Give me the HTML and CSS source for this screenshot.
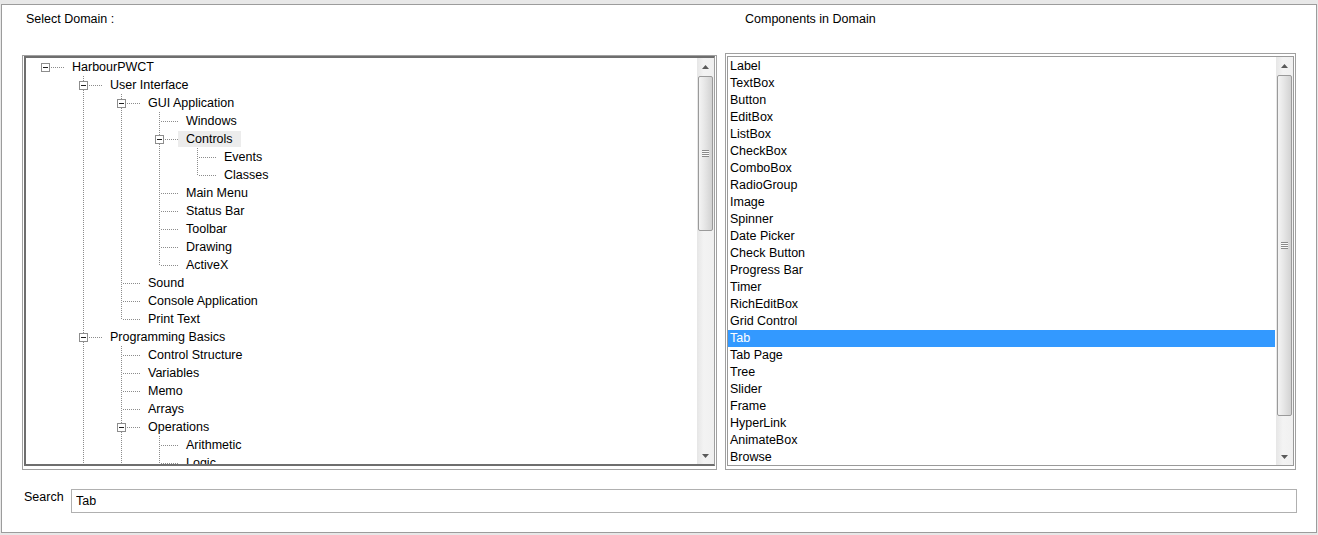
FILE: index.html
```html
<!DOCTYPE html>
<html>
<head>
<meta charset="utf-8">
<title>Select Domain</title>
<link rel="stylesheet" href="styles.css">
</head>
<body>
<div class="window">
  <div class="heads">
    <div class="head head-left">Select Domain :</div>
    <div class="head">Components in Domain</div>
  </div>
  <div class="panes">
    <div class="tframe">
      <div class="tinner">
        <div class="tree">
          <div class="node"><span class="g r"><i class="box"></i></span><span class="lbl">HarbourPWCT</span></div>
          <div class="node"><span class="g"></span><span class="g t"><i class="box"></i></span><span class="lbl">User Interface</span></div>
          <div class="node"><span class="g"></span><span class="g v"></span><span class="g t"><i class="box"></i></span><span class="lbl">GUI Application</span></div>
          <div class="node"><span class="g"></span><span class="g v"></span><span class="g v"></span><span class="g t"></span><span class="lbl">Windows</span></div>
          <div class="node"><span class="g"></span><span class="g v"></span><span class="g v"></span><span class="g t"><i class="box"></i></span><span class="lbl sel">Controls</span></div>
          <div class="node"><span class="g"></span><span class="g v"></span><span class="g v"></span><span class="g v"></span><span class="g t"></span><span class="lbl">Events</span></div>
          <div class="node"><span class="g"></span><span class="g v"></span><span class="g v"></span><span class="g v"></span><span class="g l"></span><span class="lbl">Classes</span></div>
          <div class="node"><span class="g"></span><span class="g v"></span><span class="g v"></span><span class="g t"></span><span class="lbl">Main Menu</span></div>
          <div class="node"><span class="g"></span><span class="g v"></span><span class="g v"></span><span class="g t"></span><span class="lbl">Status Bar</span></div>
          <div class="node"><span class="g"></span><span class="g v"></span><span class="g v"></span><span class="g t"></span><span class="lbl">Toolbar</span></div>
          <div class="node"><span class="g"></span><span class="g v"></span><span class="g v"></span><span class="g t"></span><span class="lbl">Drawing</span></div>
          <div class="node"><span class="g"></span><span class="g v"></span><span class="g v"></span><span class="g l"></span><span class="lbl">ActiveX</span></div>
          <div class="node"><span class="g"></span><span class="g v"></span><span class="g t"></span><span class="lbl">Sound</span></div>
          <div class="node"><span class="g"></span><span class="g v"></span><span class="g t"></span><span class="lbl">Console Application</span></div>
          <div class="node"><span class="g"></span><span class="g v"></span><span class="g l"></span><span class="lbl">Print Text</span></div>
          <div class="node"><span class="g"></span><span class="g t"><i class="box"></i></span><span class="lbl">Programming Basics</span></div>
          <div class="node"><span class="g"></span><span class="g v"></span><span class="g t"></span><span class="lbl">Control Structure</span></div>
          <div class="node"><span class="g"></span><span class="g v"></span><span class="g t"></span><span class="lbl">Variables</span></div>
          <div class="node"><span class="g"></span><span class="g v"></span><span class="g t"></span><span class="lbl">Memo</span></div>
          <div class="node"><span class="g"></span><span class="g v"></span><span class="g t"></span><span class="lbl">Arrays</span></div>
          <div class="node"><span class="g"></span><span class="g v"></span><span class="g t"><i class="box"></i></span><span class="lbl">Operations</span></div>
          <div class="node"><span class="g"></span><span class="g v"></span><span class="g v"></span><span class="g t"></span><span class="lbl">Arithmetic</span></div>
          <div class="node"><span class="g"></span><span class="g v"></span><span class="g v"></span><span class="g t"></span><span class="lbl">Logic</span></div>
        </div>
        <div class="sb">
          <div class="sbtn"><svg width="7" height="4" viewBox="0 0 7 4"><polygon points="0,4 3.5,0 7,4" fill="#5a5a5a"/></svg></div>
          <div class="thumb thumb-tree"><span class="grip"></span></div>
          <div class="track"></div>
          <div class="sbtn"><svg width="7" height="4" viewBox="0 0 7 4"><polygon points="0,0 7,0 3.5,4" fill="#5a5a5a"/></svg></div>
        </div>
      </div>
    </div>
    <div class="lframe">
      <div class="linner">
        <div class="list">
          <div class="item">Label</div>
          <div class="item">TextBox</div>
          <div class="item">Button</div>
          <div class="item">EditBox</div>
          <div class="item">ListBox</div>
          <div class="item">CheckBox</div>
          <div class="item">ComboBox</div>
          <div class="item">RadioGroup</div>
          <div class="item">Image</div>
          <div class="item">Spinner</div>
          <div class="item">Date Picker</div>
          <div class="item">Check Button</div>
          <div class="item">Progress Bar</div>
          <div class="item">Timer</div>
          <div class="item">RichEditBox</div>
          <div class="item">Grid Control</div>
          <div class="item sel">Tab</div>
          <div class="item">Tab Page</div>
          <div class="item">Tree</div>
          <div class="item">Slider</div>
          <div class="item">Frame</div>
          <div class="item">HyperLink</div>
          <div class="item">AnimateBox</div>
          <div class="item">Browse</div>
        </div>
        <div class="sb">
          <div class="sbtn"><svg width="7" height="4" viewBox="0 0 7 4"><polygon points="0,4 3.5,0 7,4" fill="#5a5a5a"/></svg></div>
          <div class="thumb thumb-list"><span class="grip"></span></div>
          <div class="track"></div>
          <div class="sbtn"><svg width="7" height="4" viewBox="0 0 7 4"><polygon points="0,0 7,0 3.5,4" fill="#5a5a5a"/></svg></div>
        </div>
      </div>
    </div>
  </div>
  <div class="search">
    <label class="slabel" for="q">Search</label>
    <input class="sinput" id="q" type="text" value="Tab">
  </div>
</div>
</body>
</html>
```
FILE: styles.css
```css
html, body {
  margin: 0;
  padding: 0;
}
body {
  background: #e8e8e8;
  font-family: "Liberation Sans", Arial, sans-serif;
  font-size: 12.5px;
  color: #000;
  height: 535px;
  overflow: hidden;
}
.window {
  margin: 4px 1px 0 1px;
  border: 1px solid #9c9c9c;
  background: #fff;
  height: 527px;
}
.heads {
  display: flex;
  padding: 7px 0 0 24px;
  line-height: 14px;
}
.head-left {
  width: 719px;
}
.panes {
  display: flex;
  align-items: flex-start;
  margin-top: 27px;
  padding-left: 20px;
  gap: 8px;
}
.tframe {
  width: 695px;
  box-sizing: border-box;
  margin-top: 2px;
  border: 1px solid #a0a0a0;
  padding: 0 1px 3px 1px;
}
.tinner {
  display: flex;
  height: 406px;
  border-style: solid;
  border-width: 2px 1px 2px 2px;
  border-color: #6e6e6e #a0a0a0 #6e6e6e #6e6e6e;
  overflow: hidden;
}
.tree {
  flex: 1;
  overflow: hidden;
}
.node {
  display: flex;
  align-items: center;
  height: 18px;
  white-space: nowrap;
}
.g {
  flex: none;
  width: 38px;
  height: 18px;
  display: flex;
  align-items: center;
  background-repeat: no-repeat;
}
.v {
  background-image: repeating-linear-gradient(to bottom, #8c8c8c 0 1px, transparent 1px 2px);
  background-size: 1px 18px;
  background-position: 19px 0;
}
.t {
  background-image:
    repeating-linear-gradient(to bottom, #8c8c8c 0 1px, transparent 1px 2px),
    repeating-linear-gradient(to right, #8c8c8c 0 1px, transparent 1px 2px);
  background-size: 1px 18px, 18px 1px;
  background-position: 19px 0, 21px 9px;
}
.l {
  background-image:
    repeating-linear-gradient(to bottom, #8c8c8c 0 1px, transparent 1px 2px),
    repeating-linear-gradient(to right, #8c8c8c 0 1px, transparent 1px 2px);
  background-size: 1px 10px, 18px 1px;
  background-position: 19px 0, 21px 9px;
}
.r {
  background-image: repeating-linear-gradient(to right, #8c8c8c 0 1px, transparent 1px 2px);
  background-size: 14px 1px;
  background-position: 25px 9px;
}
.box {
  display: block;
  width: 9px;
  height: 9px;
  box-sizing: border-box;
  margin-left: 15px;
  margin-top: 1px;
  border: 1px solid #8d8d8d;
  background: #fff linear-gradient(#1e1e1e, #1e1e1e) center / 5px 1px no-repeat;
}
.lbl {
  padding: 0 8px;
  line-height: 16px;
}
.lbl.sel {
  background: #ececec;
}
.sb {
  flex: none;
  width: 17px;
  display: flex;
  flex-direction: column;
  background: linear-gradient(to right, #e6e6e6, #f3f3f3 40%, #f0f0f0);
}
.sbtn {
  height: 17px;
  flex: none;
  display: flex;
  align-items: center;
  justify-content: center;
}
.thumb {
  flex: none;
  margin: 1px 1px 0 1px;
  box-sizing: border-box;
  border: 1px solid #9a9a9a;
  border-radius: 2px;
  background: linear-gradient(to right, #f4f4f4, #e6e6e6 45%, #d2d2d2);
  display: flex;
  align-items: center;
  justify-content: center;
}
.thumb-tree {
  height: 155px;
}
.thumb-list {
  height: 341px;
}
.grip {
  width: 7px;
  height: 7px;
  background: repeating-linear-gradient(to bottom, #8a8a8a 0 1px, #fafafa 1px 2px);
}
.track {
  flex: 1;
}
.lframe {
  width: 571px;
  box-sizing: border-box;
  border: 1px solid #a0a0a0;
  padding: 2px 1px 3px 1px;
}
.linner {
  display: flex;
  height: 408px;
  border: 1px solid #9a9a9a;
  overflow: hidden;
}
.list {
  flex: 1;
  padding-top: 1px;
  padding-right: 1px;
}
.item {
  height: 17px;
  line-height: 17px;
  padding-left: 2px;
  white-space: nowrap;
}
.item.sel {
  background: #3399ff;
  color: #fff;
}
.search {
  display: flex;
  align-items: flex-start;
  margin-top: 19px;
  padding-left: 22px;
}
.slabel {
  width: 47px;
  flex: none;
  line-height: 14px;
  margin-top: 1px;
}
.sinput {
  width: 1226px;
  height: 24px;
  box-sizing: border-box;
  margin: 0;
  border: 1px solid #b0b0b0;
  padding: 0 4px;
  font-family: "Liberation Sans", Arial, sans-serif;
  font-size: 12.5px;
  color: #000;
  outline: none;
}
```
